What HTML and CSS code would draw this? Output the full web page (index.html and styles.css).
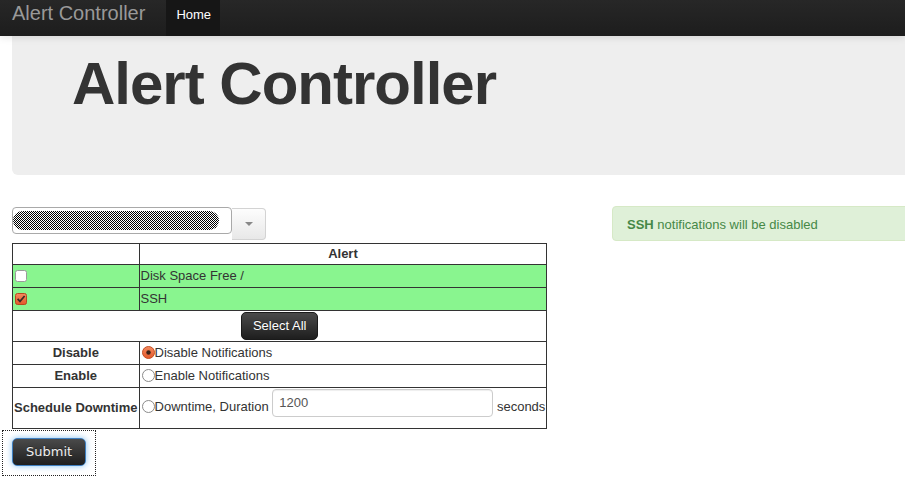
FILE: index.html
```html
<!DOCTYPE html>
<html>
<head>
<meta charset="utf-8">
<title>Alert Controller</title>
<link rel="stylesheet" href="styles.css">
</head>
<body>
<div class="navbar">
  <span class="brand">Alert Controller</span>
  <span class="nav-link active">Home</span>
</div>
<div class="container">
  <div class="hero"><h1>Alert Controller</h1></div>
  <div class="row">
    <div class="col">
      <form class="alert-form">
        <div class="combo">
          <div class="combo-input"><svg class="scribble" width="206" height="19" viewBox="0 0 206 19"><defs><pattern id="dith" width="2" height="2" patternUnits="userSpaceOnUse"><rect width="2" height="2" fill="#fff"/><rect width="1" height="1" fill="#000"/><rect x="1" y="1" width="1" height="1" fill="#000"/></pattern></defs><rect x="0" y="0" width="206" height="19" rx="9.5" fill="url(#dith)"/></svg></div>
          <span class="combo-btn"><span class="caret"></span></span>
        </div>
        <table class="alerts">
          <thead>
            <tr><th class="lbl"></th><th>Alert</th></tr>
          </thead>
          <tbody>
            <tr class="ok">
              <td><span class="cb"><svg width="12" height="12" viewBox="0 0 12 12"><rect x="0.5" y="0.5" width="11" height="11" rx="2" fill="#fff" stroke="#9a9a9a"/></svg></span></td>
              <td>Disk Space Free /</td>
            </tr>
            <tr class="ok">
              <td><span class="cb"><svg width="12" height="12" viewBox="0 0 12 12"><defs><linearGradient id="og" x1="0" y1="0" x2="0" y2="1"><stop offset="0" stop-color="#f58a60"/><stop offset="1" stop-color="#e2582a"/></linearGradient></defs><rect x="0.5" y="0.5" width="11" height="11" rx="2" fill="url(#og)" stroke="#b9471f"/><path d="M2.6 5.8 L5 8.4 L9.6 3" fill="none" stroke="#3a2a22" stroke-width="1.7"/></svg></span></td>
              <td>SSH</td>
            </tr>
            <tr>
              <td colspan="2" class="center"><button type="button" class="btn">Select All</button></td>
            </tr>
            <tr>
              <th class="lbl">Disable</th>
              <td><span class="radio"><svg width="13" height="13" viewBox="0 0 13 13"><defs><linearGradient id="rg" x1="0" y1="0" x2="0" y2="1"><stop offset="0" stop-color="#f58a60"/><stop offset="1" stop-color="#e2582a"/></linearGradient></defs><circle cx="6.5" cy="6.5" r="6" fill="url(#rg)" stroke="#c24e24"/><circle cx="6.5" cy="6.5" r="2.2" fill="#3a2218"/></svg></span>Disable Notifications</td>
            </tr>
            <tr>
              <th class="lbl">Enable</th>
              <td><span class="radio"><svg width="13" height="13" viewBox="0 0 13 13"><circle cx="6.5" cy="6.5" r="6" fill="#fff" stroke="#8a8a8a"/></svg></span>Enable Notifications</td>
            </tr>
            <tr>
              <th class="lbl">Schedule Downtime</th>
              <td><span class="radio"><svg width="13" height="13" viewBox="0 0 13 13"><circle cx="6.5" cy="6.5" r="6" fill="#fff" stroke="#8a8a8a"/></svg></span>Downtime, Duration <input class="text-input" type="text" value="1200"> seconds</td>
            </tr>
          </tbody>
        </table>
        <div class="submit-wrap"><button type="button" class="btn submit">Submit</button></div>
      </form>
    </div>
    <div class="col">
      <div class="alert"><strong>SSH</strong> notifications will be disabled</div>
    </div>
  </div>
</div>
</body>
</html>
```
FILE: styles.css
```css
html, body {
  margin: 0;
  padding: 0;
  overflow: hidden;
  background: #fff;
}
body {
  font-family: "Liberation Sans", Arial, sans-serif;
  font-size: 13px;
  line-height: 20px;
  color: #333;
  width: 905px;
  height: 498px;
}
.navbar {
  position: relative;
  z-index: 2;
  height: 36px;
  display: flex;
  align-items: flex-start;
  background: linear-gradient(#272727, #1d1d1d);
  box-shadow: 0 1px 8px rgba(0,0,0,0.12);
}
.brand {
  padding: 3px 0 0 12px;
  font-size: 20px;
  line-height: 20px;
  color: #999;
}
.nav-link {
  margin-left: 21px;
  height: 31px;
  padding: 5px 9px 0 10px;
  font-size: 13px;
  line-height: 20px;
  color: #fff;
}
.nav-link.active {
  background: #161616;
}
.container {
  margin-left: 12px;
  width: 1170px;
}
.hero {
  background: #eee;
  border-radius: 0 0 6px 6px;
  padding: 18px 60px 61px;
}
.hero h1 {
  margin: 0;
  font-size: 60px;
  line-height: 60px;
  font-weight: bold;
  letter-spacing: -1px;
  color: #333;
}
.row {
  margin-top: 31px;
  display: grid;
  grid-template-columns: 570px 570px;
  column-gap: 30px;
}
.alert-form {
  margin: 0;
}
.combo {
  margin-top: 1px;
  height: 36px;
  display: flex;
  align-items: flex-start;
}
.combo-input {
  box-sizing: border-box;
  width: 220px;
  height: 27px;
  border: 1px solid #a9a9a9;
  border-radius: 4px;
  padding: 3px 0 0 0;
  background: #fff;
}
.scribble {
  display: block;
}
.combo-btn {
  box-sizing: border-box;
  margin-top: 1px;
  width: 34px;
  height: 32px;
  border: 1px solid #d3d3d3;
  border-left: none;
  border-radius: 0 4px 4px 0;
  background: linear-gradient(#fdfdfd, #e8e8e8);
  display: flex;
  align-items: center;
  justify-content: center;
}
.caret {
  width: 0;
  height: 0;
  border-left: 4px solid transparent;
  border-right: 4px solid transparent;
  border-top: 4px solid #888;
}
.alerts {
  border-collapse: collapse;
  border: 1px solid #333;
}
.alerts th, .alerts td {
  border: 1px solid #333;
  padding: 1px;
  line-height: 20px;
  white-space: nowrap;
  vertical-align: middle;
}
.alerts thead th {
  padding: 0 1px;
}
.alerts th {
  font-weight: bold;
  text-align: center;
}
.alerts th.lbl {
  width: 1px;
}
.alerts td {
  text-align: left;
}
.alerts tr.ok td {
  background: #89f58f;
}
.alerts td.center {
  text-align: center;
}
.cb {
  display: inline-block;
  width: 12px;
  height: 12px;
  margin: 0 0 0 1px;
  vertical-align: -2px;
}
.cb svg, .radio svg {
  display: block;
}
.radio {
  display: inline-block;
  width: 13px;
  height: 13px;
  margin: 0 0 0 1px;
  vertical-align: -2px;
}
.btn {
  box-sizing: border-box;
  font-family: "Liberation Sans", Arial, sans-serif;
  font-size: 13px;
  line-height: 18px;
  padding: 4px 11px;
  height: 28px;
  color: #fff;
  background: linear-gradient(#4a4a4a, #1e1e1e);
  border: 1px solid #1a1a1a;
  border-radius: 5px;
  text-shadow: 0 -1px 0 rgba(0,0,0,0.3);
  vertical-align: middle;
}
.submit-wrap {
  margin: 1px 0 0 -10px;
  width: max-content;
  display: flex;
  border: 1px dotted #222;
  padding: 7px 9px 9px 9px;
}
.btn.submit {
  font-family: "DejaVu Sans", Verdana, sans-serif;
  font-size: 13px;
  padding: 4px 13px;
  width: 74px;
  color: #eee;
  border-color: #3f7fc0;
  box-shadow: 0 0 6px rgba(82,168,236,0.7);
}
.text-input {
  box-sizing: border-box;
  width: 221px;
  height: 28px;
  margin: 0 0 10px 0;
  padding: 2px 6px 4px;
  border: 1px solid #ccc;
  border-radius: 4px;
  font-family: "Liberation Sans", Arial, sans-serif;
  font-size: 13px;
  line-height: 20px;
  color: #555;
  vertical-align: middle;
  box-shadow: inset 0 1px 1px rgba(0,0,0,0.07);
}
.alert {
  padding: 9px 14px 7px;
  line-height: 17px;
  font-size: 13px;
  color: #468847;
  background: #dff0d8;
  border: 1px solid #d6e9c6;
  border-radius: 4px;
}
```
